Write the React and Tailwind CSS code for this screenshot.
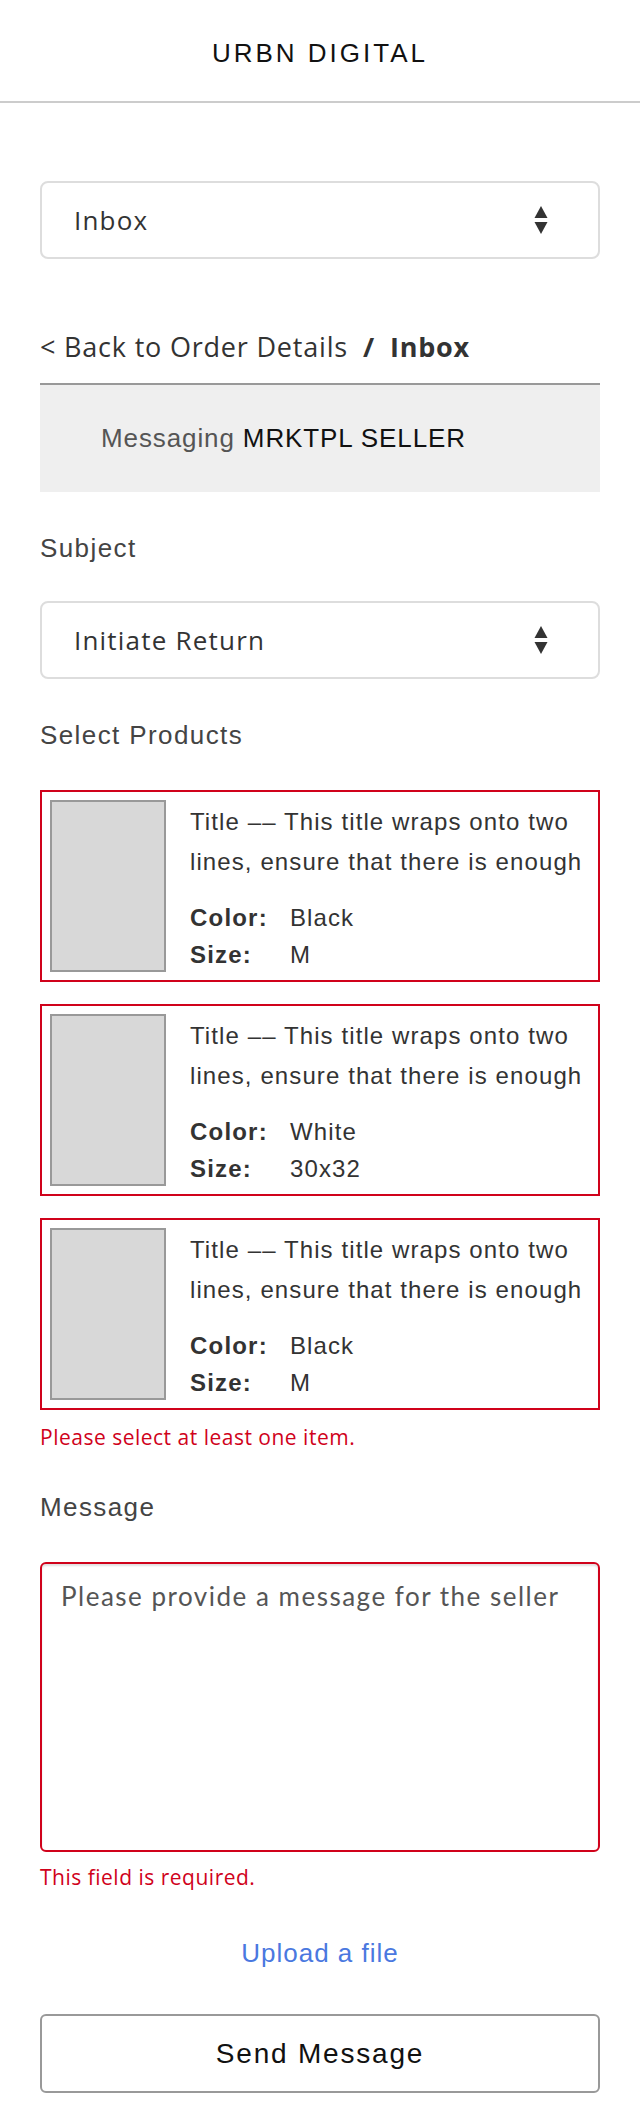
import React from "react";

const products = [
  { color: "Black", size: "M" },
  { color: "White", size: "30x32" },
  { color: "Black", size: "M" },
];

function SelectArrows() {
  return (
    <svg width="14" height="29" viewBox="0 0 14 29" className="shrink-0">
      <path d="M7 0 L13.5 12 L0.5 12 Z" fill="#333" />
      <path d="M0.5 16 L13.5 16 L7 28 Z" fill="#333" />
    </svg>
  );
}

function FakeSelect({ value, className = "" }) {
  return (
    <div
      className={`h-[78px] rounded-[8px] border-2 border-[#ddd] flex items-center justify-between pl-[32px] pr-[50px] ${className}`}
    >
      <span className="font-['Open_Sans',sans-serif] text-[26px] text-[#333] tracking-[1.2px]">
        {value}
      </span>
      <SelectArrows />
    </div>
  );
}

function ProductCard({ color, size }) {
  return (
    <div className="h-[192px] border-2 border-[#d0021b] p-2 flex gap-6">
      <div className="w-[116px] shrink-0 bg-[#d8d8d8] border-2 border-[#999]" />
      <div className="flex-1 pt-[2px] font-['Liberation_Sans',sans-serif] text-[24px] text-[#333] tracking-[1.1px]">
        <p className="leading-[40px]">
          Title –– This title wraps onto two lines, ensure that there is enough
        </p>
        <div className="mt-[17px] leading-[37px]">
          <div className="flex">
            <span className="w-[100px] font-bold tracking-[1.2px]">Color:</span>
            <span>{color}</span>
          </div>
          <div className="flex">
            <span className="w-[100px] font-bold tracking-[1.2px]">Size:</span>
            <span>{size}</span>
          </div>
        </div>
      </div>
    </div>
  );
}

export default function App() {
  return (
    <div className="min-h-screen bg-white font-['Liberation_Sans',sans-serif]">
      {/* Header */}
      <header className="h-[103px] pt-[6px] border-b-2 border-[#ccc] flex items-center justify-center">
        <h1 className="text-[26px] tracking-[3px] text-[#111]">URBN DIGITAL</h1>
      </header>

      <main className="px-10 pb-[35px]">
        <FakeSelect value="Inbox" className="mt-[78px]" />

        {/* Breadcrumb */}
        <div className="mt-[72px] leading-[32px] font-['Open_Sans',sans-serif] text-[27px] text-[#333] tracking-[0.8px]">
          &lt; Back to Order Details
          <span className="font-bold ml-[15px] mr-[15px]">/</span>
          <span className="font-bold">Inbox</span>
        </div>

        <div className="mt-[20px] h-[109px] border-t-2 border-[#999] bg-[#efefef] flex items-center pl-[61px] text-[26px] tracking-[0.9px]">
          <span className="text-[#555]">Messaging</span>
          <span className="ml-[8px] text-[#111]">MRKTPL SELLER</span>
        </div>

        <label className="block mt-[40px] leading-[32px] text-[26px] text-[#444] tracking-[1.4px]">
          Subject
        </label>
        <FakeSelect value="Initiate Return" className="mt-[37px]" />

        <label className="block mt-[40px] leading-[32px] text-[26px] text-[#444] tracking-[1.4px]">
          Select Products
        </label>
        <div className="mt-[39px] flex flex-col gap-[22px]">
          {products.map((p, i) => (
            <ProductCard key={i} color={p.color} size={p.size} />
          ))}
        </div>
        <p className="mt-[15px] leading-[24px] font-['Open_Sans',sans-serif] text-[21px] tracking-[0.5px] text-[#d0021b]">
          Please select at least one item.
        </p>

        <label className="block mt-[42px] leading-[32px] text-[26px] text-[#444] tracking-[1.4px]">
          Message
        </label>
        <textarea
          placeholder="Please provide a message for the seller"
          className="mt-[39px] block w-full h-[290px] rounded-[6px] border-2 border-[#d0021b] shadow-[inset_0_2px_2px_rgba(0,0,0,0.12)] pt-[16px] pl-[19px] pr-4 font-['Lato',sans-serif] text-[26px] leading-[32px] tracking-[1.5px] text-[#333] placeholder:text-[#555] resize-none outline-none"
        />
        <p className="mt-[13px] leading-[24px] font-['Open_Sans',sans-serif] text-[21px] tracking-[0.5px] text-[#d0021b]">
          This field is required.
        </p>

        <div className="mt-[48px] leading-[32px] text-center">
          <a className="text-[26px] text-[#4a78e0] tracking-[1px] cursor-pointer">Upload a file</a>
        </div>

        <button className="mt-[41px] w-full h-[79px] rounded-[6px] border-2 border-[#999] bg-white text-[28px] text-[#111] tracking-[1.8px]">
          Send Message
        </button>
      </main>
    </div>
  );
}
